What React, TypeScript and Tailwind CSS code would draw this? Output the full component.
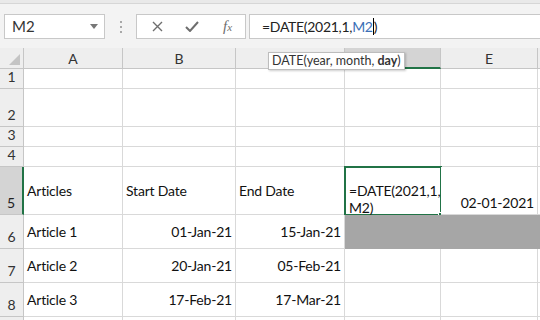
import React from 'react';

// C and D letters sit under the function tooltip, so they are left blank
const cols = ['A', 'B', '', '', 'E', ''];
const rowHeights = ['h-[20px]', 'h-[38px]', 'h-[20px]', 'h-[20px]', 'h-[48px]', 'h-[34px]', 'h-[34px]', 'h-[34px]', 'h-[34px]'];

type Cell = { text?: React.ReactNode; align?: 'left' | 'right'; valign?: 'center' | 'bottom' };

const data: Record<number, Cell[]> = {
  5: [
    { text: 'Articles', valign: 'center' },
    { text: 'Start Date', valign: 'center' },
    { text: 'End Date', valign: 'center' },
    {},
    { text: '02-01-2021', align: 'right', valign: 'bottom' },
    {},
  ],
  6: [
    { text: 'Article 1' },
    { text: '01-Jan-21', align: 'right' },
    { text: '15-Jan-21', align: 'right' },
    {},
    {},
    {},
  ],
  7: [
    { text: 'Article 2' },
    { text: '20-Jan-21', align: 'right' },
    { text: '05-Feb-21', align: 'right' },
    {},
    {},
    {},
  ],
  8: [
    { text: 'Article 3' },
    { text: '17-Feb-21', align: 'right' },
    { text: '17-Mar-21', align: 'right' },
    {},
    {},
    {},
  ],
};

const FormulaBar: React.FC = () => (
  <div className="h-[48px] bg-[#f3f3f3]">
    <div className="h-[4px] bg-[#e9e9e9] border-b border-[#d6d6d6]" />
    <div className="flex items-center pt-[10px]">
      {/* Name box */}
      <div className="ml-[4px] w-[101px] h-[25px] bg-white border border-[#c8c8c8] flex items-center justify-between pl-[7px] pr-[6px]">
        <span className="text-[15px] text-[#333]">M2</span>
        <svg width="8" height="5" viewBox="0 0 8 5">
          <path d="M0 0 L8 0 L4 5 Z" fill="#777" />
        </svg>
      </div>
      {/* Grip */}
      <div className="w-[31px] flex flex-col items-center gap-[3px]">
        <span className="w-[2px] h-[2px] bg-[#a8a8a8]" />
        <span className="w-[2px] h-[2px] bg-[#a8a8a8]" />
        <span className="w-[2px] h-[2px] bg-[#a8a8a8]" />
      </div>
      {/* Buttons */}
      <div className="w-[110px] h-[25px] bg-white border border-[#c8c8c8] flex items-center">
        <div className="w-[37px] flex justify-center pl-[3px]">
          <svg width="11" height="11" viewBox="0 0 11 11">
            <path d="M1 1 L10 10 M10 1 L1 10" stroke="#6e6e6e" strokeWidth="1.4" fill="none" />
          </svg>
        </div>
        <div className="w-[36px] flex justify-center">
          <svg width="14" height="11" viewBox="0 0 14 11">
            <path d="M1 6 L5 10 L13 1" stroke="#6e6e6e" strokeWidth="2" fill="none" />
          </svg>
        </div>
        <div className="w-[35px] flex justify-center">
          <span className="italic text-[15px] text-[#6e6e6e] leading-none [font-family:'Liberation_Serif',serif]">
            f<span className="text-[11px]">x</span>
          </span>
        </div>
      </div>
      {/* Formula input */}
      <div className="ml-[3px] flex-1 h-[25px] bg-white border border-[#c8c8c8] border-r-0 flex items-center pl-[12px] text-[14px] tracking-[-0.3px] text-[#222]">
        <span>=DATE(2021,1,</span>
        <span className="text-[#3b6fb6]">M2</span>
        <span className="w-px h-[17px] bg-black" />
        <span>)</span>
      </div>
    </div>
  </div>
);

export default function App() {
  return (
    <div className="relative w-[540px] h-[320px] overflow-hidden bg-white [font-family:Lato,'Liberation_Sans',sans-serif]">
      <FormulaBar />
      <div className="grid grid-cols-[24px_99px_113px_109px_96px_97px_1fr]">
        {/* Header row */}
        <div className="h-[21px] bg-[#eeeeee] border-r border-b border-[#c6c6c6] relative">
          <svg className="absolute right-[3px] bottom-[3px]" width="11" height="11" viewBox="0 0 11 11">
            <path d="M11 0 L11 11 L0 11 Z" fill="#c4c4c4" />
          </svg>
        </div>
        {cols.map((c, i) => (
          <div
            key={i}
            className={
              i === 3
                ? 'h-[21px] bg-[#d4d4d4] border-r border-[#c6c6c6] border-b-2 border-b-[#217346] flex items-center justify-center text-[14px] text-[#222]'
                : 'h-[21px] bg-[#eeeeee] border-r border-b border-[#c6c6c6] flex items-center justify-center text-[14px] text-[#333]'
            }
          >
            {c}
          </div>
        ))}

        {rowHeights.map((h, r) => {
          const rowNum = r + 1;
          const rowData = data[rowNum] || [];
          return (
            <React.Fragment key={rowNum}>
              <div
                className={
                  rowNum === 5
                    ? `${h} bg-[#d4d4d4] border-b border-[#c6c6c6] border-r-2 border-r-[#217346] flex items-end justify-center pb-[1px] text-[14px] text-[#222]`
                    : `${h} bg-[#eeeeee] border-r border-b border-[#c6c6c6] flex items-end justify-center pb-[1px] text-[14px] text-[#333]`
                }
              >
                {rowNum < 9 ? rowNum : ''}
              </div>
              {cols.map((_, ci) => {
                const cell = rowData[ci] || {};
                const gray = rowNum === 6 && ci >= 3;
                const isActive = rowNum === 5 && ci === 3;
                const base = gray
                  ? 'bg-[#a6a6a6] border-b border-b-[#a6a6a6]'
                  : 'bg-white border-r border-b border-[#d9d9d9]';
                const align = cell.align === 'right' ? 'justify-end pr-[3px]' : 'justify-start pl-[3px]';
                const valign = cell.valign === 'bottom' ? 'items-end pb-[1px]' : 'items-center';
                return (
                  <div
                    key={ci}
                    className={`${h} ${base} relative flex ${align} ${valign} text-[14px] tracking-[-0.2px] text-[#111] whitespace-nowrap`}
                  >
                    {cell.text}
                    {isActive && (
                      <div className="absolute -left-px -top-px w-[98px] h-[50px] border-2 border-[#217346] pl-[3px] pt-[14px] leading-[17px] whitespace-normal">
                        =DATE(2021,1,
                        <br />
                        M2)
                        <span className="absolute -right-[4px] -bottom-[4px] w-[6px] h-[6px] bg-[#217346] border border-white" />
                      </div>
                    )}
                  </div>
                );
              })}
            </React.Fragment>
          );
        })}
      </div>

      {/* Function tooltip */}
      <div className="absolute left-[268px] top-[52px] h-[18px] px-[3px] flex items-center bg-white border border-[#bdbdbd] shadow-[1px_1px_2px_rgba(0,0,0,0.2)] text-[12.5px] text-[#333]">
        DATE(year, month,<b className="ml-[3px]">day</b>)
      </div>
    </div>
  );
}
